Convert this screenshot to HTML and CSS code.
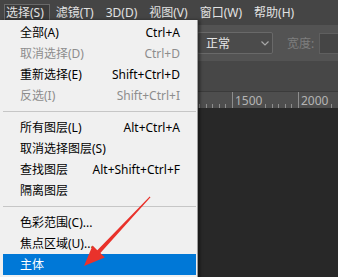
FILE: index.html
```html
<!DOCTYPE html>
<html lang="zh-CN">
	<head>
		<title>选择菜单</title>
		<meta charset="utf-8">
		<link rel="stylesheet" href="styles.css">
	</head>
<body>

<div id="app">

  <div id="menubar">
    <span class="top open">选择(S)</span>
    <span class="top">滤镜(T)</span>
    <span class="top">3D(D)</span>
    <span class="top">视图(V)</span>
    <span class="top">窗口(W)</span>
    <span class="top">帮助(H)</span>
  </div>

  <div id="options">
    <div class="select">
      <span>正常</span>
      <svg width="8" height="5" viewBox="0 0 8 5"><path d="M0.5 0.5 L4 4 L7.5 0.5" fill="none" stroke="#a8a8a8" stroke-width="1.2"/></svg>
    </div>
    <span class="label">宽度:</span>
    <div class="field"></div>
  </div>

  <div id="tabs"></div>

  <div id="ruler">
    <span class="mark" style="left:232px">1500</span>
    <span class="mark" style="left:298px">2000</span>
  </div>

  <div id="canvas"></div>

  <ul id="menu">
    <li class="item"><span>全部(A)</span><span class="key">Ctrl+A</span></li>
    <li class="item off"><span>取消选择(D)</span><span class="key">Ctrl+D</span></li>
    <li class="item"><span>重新选择(E)</span><span class="key">Shift+Ctrl+D</span></li>
    <li class="item off"><span>反选(I)</span><span class="key">Shift+Ctrl+I</span></li>
    <li class="sep"></li>
    <li class="item"><span>所有图层(L)</span><span class="key">Alt+Ctrl+A</span></li>
    <li class="item"><span>取消选择图层(S)</span></li>
    <li class="item"><span>查找图层</span><span class="key">Alt+Shift+Ctrl+F</span></li>
    <li class="item"><span>隔离图层</span></li>
    <li class="sep"></li>
    <li class="item"><span>色彩范围(C)...</span></li>
    <li class="item"><span>焦点区域(U)...</span></li>
    <li class="item sel"><span>主体</span></li>
  </ul>

  <!-- red annotation arrow -->
  <svg id="arrow" width="338" height="277" viewBox="0 0 338 277">
    <polygon points="150.5,197.3 100.4,253 104.8,257.4 84,266 92.6,245.6 97.3,250.2 149.7,196.6" fill="#e9322b"/>
  </svg>

</div>

</body>
</html>
```

FILE: styles.css
```css
html, body {
margin: 0;
padding: 0;
height: 100%;
}

body {
background: #282828;
font-family: "Noto Sans", "Noto Sans CJK SC", sans-serif;
font-size: 12px;
overflow: hidden;
}

#app {
position: relative;
width: 338px;
height: 277px;
overflow: hidden;
display: flex;
flex-direction: column;
}

#menubar {
height: 25px;
flex: none;
background: #454545;
display: flex;
align-items: center;
padding-left: 4px;
color: #e2e2e2;
white-space: nowrap;
}

.top {
height: 16px;
line-height: 16px;
padding: 0 5px 0 1px;
margin-right: 4px;
border: 1px solid transparent;
}

.top.open {
background: #3b3b3b;
border-color: #6a6a6a;
}

#options {
height: 36px;
flex: none;
background: #535353;
display: flex;
align-items: center;
padding-left: 197px;
}

#options > * {
flex: none;
}

.select {
width: 76px;
height: 22px;
box-sizing: border-box;
border: 1px solid #696969;
border-radius: 2px;
background: #4b4b4b;
display: flex;
align-items: center;
justify-content: space-between;
padding: 0 3px 0 8px;
color: #e6e6e6;
}

.label {
margin-left: 14px;
color: #7e7e7e;
}

.field {
margin-left: 5px;
width: 30px;
height: 19px;
background: #454545;
border: 1px solid #5f5f5f;
}

#tabs {
height: 30px;
flex: none;
background: #474747;
}

#ruler {
position: relative;
height: 16px;
flex: none;
background-color: #4e4e4e;
border-top: 1px solid #3b3b3b;
background-image: repeating-linear-gradient(to right, #8d8d8d 0 1px, transparent 1px 6.6px);
background-size: 100% 4px;
background-position: 1px bottom;
background-repeat: no-repeat;
}

.mark {
position: absolute;
top: 0;
height: 16px;
line-height: 17px;
padding-left: 2px;
border-left: 1px solid #8d8d8d;
color: #b4b4b4;
font-size: 12px;
background: #4e4e4e;
}

#canvas {
flex: 1;
background: #282828;
}

#menu {
position: absolute;
top: 20px;
left: 0;
width: 197px;
height: 270px;
margin: 0;
padding: 2px 0;
list-style: none;
background: #f0f0f0;
border-right: 1px solid #9c9c9c;
box-shadow: 2px 0 3px rgba(0, 0, 0, 0.45);
}

.item {
display: flex;
justify-content: space-between;
height: 21px;
line-height: 21px;
margin: 0 1px 0 3px;
padding: 0 16px 0 17px;
color: #000;
white-space: nowrap;
}

.item.off {
color: #8d8d8d;
}

.item.sel {
background: #0078d7;
color: #fff;
}

.sep {
height: 1px;
margin: 5px 1px 5px 3px;
background: #c6c6c6;
}

#arrow {
position: absolute;
left: 0;
top: 0;
pointer-events: none;
}
```
